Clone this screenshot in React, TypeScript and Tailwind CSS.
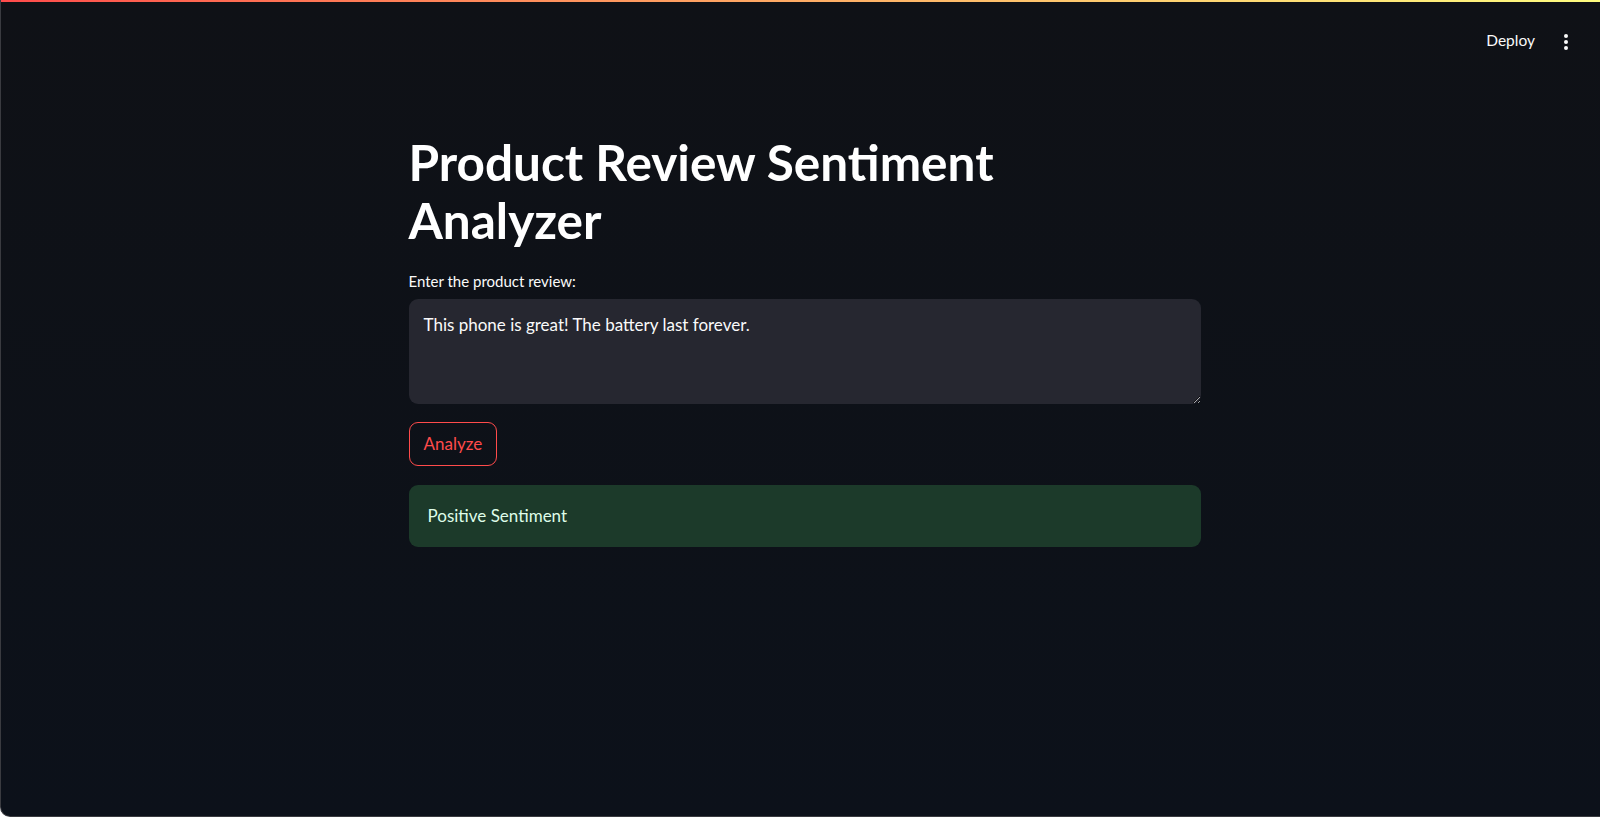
import React from "react";

export default function App() {
  return (
    <div
      className="relative h-[817px] w-[1600px] overflow-hidden bg-gradient-to-b from-[#0f1116] to-[#0c111a] text-[#fafafa] border-l border-b border-[#3a3b40] rounded-bl-[10px]"
      style={{ fontFamily: '"Lato", "Noto Sans", sans-serif' }}
    >
      <div className="h-[2px] w-full bg-gradient-to-r from-[#ff4b4b] to-[#fffd80]" />
      <header className="flex h-[78px] items-center justify-end gap-[28px] pr-[31px]">
        <span className="text-[15.5px] text-[#fafafa]">Deploy</span>
        <svg width="6" height="18" viewBox="0 0 6 18" className="mt-[1px]">
          <circle cx="3" cy="3" r="2" fill="#fafafa" />
          <circle cx="3" cy="9" r="2" fill="#fafafa" />
          <circle cx="3" cy="15" r="2" fill="#fafafa" />
        </svg>
      </header>
      <main className="flex justify-center pl-[8px]">
        <div className="flex w-[792px] flex-col pt-[53px]">
          <h1 className="text-[49.5px] font-bold leading-[58px] text-white">
            Product Review Sentiment
            <br />
            Analyzer
          </h1>
          <label className="mt-[22px] text-[15px] leading-[20px] text-[#fafafa]">
            Enter the product review:
          </label>
          <textarea
            className="mt-[8px] h-[105px] w-full resize-y rounded-[9px] bg-[#262730] px-[15px] pt-[12px] text-[17px] leading-[28px] text-[#fafafa] outline-none"
            defaultValue="This phone is great! The battery last forever."
          />
          <div className="mt-[18px] flex">
            <button className="h-[44px] rounded-[9px] border border-[#ff4b4b] px-[14px] text-[17px] text-[#ff4b4b]">
              Analyze
            </button>
          </div>
          <div className="mt-[19px] flex h-[62px] items-center rounded-[9px] bg-[#1c3a2a] px-[19px] text-[17px] text-[#dffde9]">
            Positive Sentiment
          </div>
        </div>
      </main>
    </div>
  );
}
